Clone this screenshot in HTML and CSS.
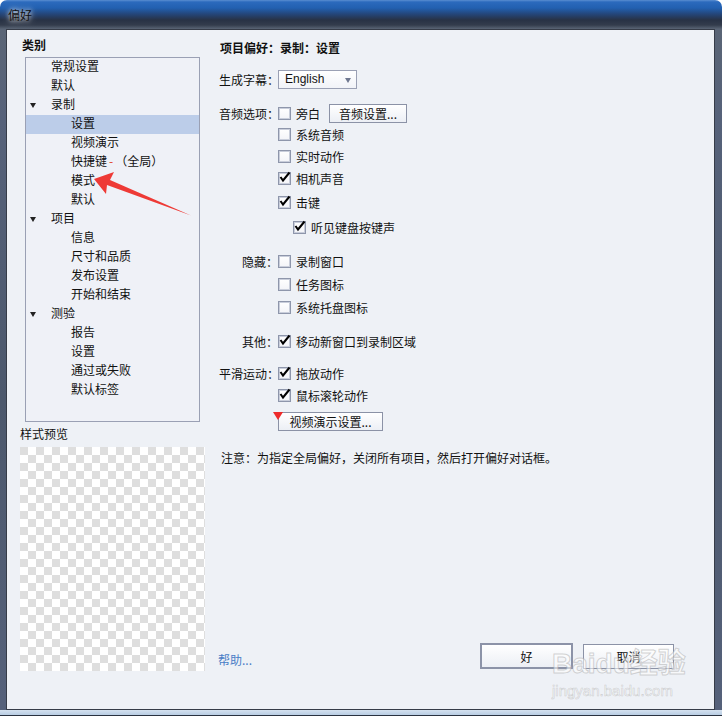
FILE: index.html
```html
<!DOCTYPE html>
<html lang="zh-CN">
<head>
<meta charset="utf-8">
<title>偏好</title>
<link rel="stylesheet" href="styles.css">
</head>
<body>
<div class="window">
  <div class="titlebar"><span class="title">偏好</span></div>
  <div class="client">
    <div class="left">
      <div class="cat-label">类别</div>
      <div class="tree">
        <div class="node l1">常规设置</div>
        <div class="node l1">默认</div>
        <div class="node l1"><span class="tri"></span>录制</div>
        <div class="node l2 sel">设置</div>
        <div class="node l2">视频演示</div>
        <div class="node l2">快捷键 <span class="dash">-</span> （全局）</div>
        <div class="node l2">模式</div>
        <div class="node l2">默认</div>
        <div class="node l1"><span class="tri"></span>项目</div>
        <div class="node l2">信息</div>
        <div class="node l2">尺寸和品质</div>
        <div class="node l2">发布设置</div>
        <div class="node l2">开始和结束</div>
        <div class="node l1"><span class="tri"></span>测验</div>
        <div class="node l2">报告</div>
        <div class="node l2">设置</div>
        <div class="node l2">通过或失败</div>
        <div class="node l2">默认标签</div>
      </div>
      <div class="preview-label">样式预览</div>
      <div class="checker"></div>
    </div>

    <div class="right">
      <div class="row heading">项目偏好：录制：设置</div>

      <div class="row mt12">
        <span class="lbl">生成字幕：</span>
        <span class="select"><span class="sel-text">English</span><span class="sel-arrow"></span></span>
      </div>

      <div class="row mt14">
        <span class="lbl">音频选项：</span>
        <span class="cb"></span><span class="txt">旁白</span>
        <span class="btn btn-audio">音频设置...</span>
      </div>
      <div class="row mt1 ind"><span class="cb"></span><span class="txt">系统音频</span></div>
      <div class="row mt2 ind"><span class="cb"></span><span class="txt">实时动作</span></div>
      <div class="row mt2 ind"><span class="cb on"><svg viewBox="0 0 13 13" width="13" height="13"><polyline points="2.5,6 5,9.5 11.5,1.5" fill="none" stroke="#000" stroke-width="2"/></svg></span><span class="txt">相机声音</span></div>
      <div class="row mt4 ind"><span class="cb on"><svg viewBox="0 0 13 13" width="13" height="13"><polyline points="2.5,6 5,9.5 11.5,1.5" fill="none" stroke="#000" stroke-width="2"/></svg></span><span class="txt">击键</span></div>
      <div class="row mt5 ind2"><span class="cb on"><svg viewBox="0 0 13 13" width="13" height="13"><polyline points="2.5,6 5,9.5 11.5,1.5" fill="none" stroke="#000" stroke-width="2"/></svg></span><span class="txt">听见键盘按键声</span></div>

      <div class="row mt14">
        <span class="lbl">隐藏：</span>
        <span class="cb"></span><span class="txt">录制窗口</span>
      </div>
      <div class="row mt3 ind"><span class="cb"></span><span class="txt">任务图标</span></div>
      <div class="row mt3 ind"><span class="cb"></span><span class="txt">系统托盘图标</span></div>

      <div class="row mt14">
        <span class="lbl">其他：</span>
        <span class="cb on"><svg viewBox="0 0 13 13" width="13" height="13"><polyline points="2.5,6 5,9.5 11.5,1.5" fill="none" stroke="#000" stroke-width="2"/></svg></span><span class="txt">移动新窗口到录制区域</span>
      </div>

      <div class="row mt12">
        <span class="lbl">平滑运动：</span>
        <span class="cb on"><svg viewBox="0 0 13 13" width="13" height="13"><polyline points="2.5,6 5,9.5 11.5,1.5" fill="none" stroke="#000" stroke-width="2"/></svg></span><span class="txt">拖放动作</span>
      </div>
      <div class="row mt2 ind"><span class="cb on"><svg viewBox="0 0 13 13" width="13" height="13"><polyline points="2.5,6 5,9.5 11.5,1.5" fill="none" stroke="#000" stroke-width="2"/></svg></span><span class="txt">鼠标滚轮动作</span></div>

      <div class="row mt6 ind">
        <span class="btn btn-video">视频演示设置...</span>
      </div>

      <div class="row mt16 note">注意：为指定全局偏好，关闭所有项目，然后打开偏好对话框。</div>

      <div class="bottom">
        <span class="help">帮助...</span>
        <span class="spacer"></span>
        <span class="btn btn-ok">好</span>
        <span class="btn btn-cancel">取消</span>
      </div>
    </div>
  </div>

  <svg class="arrow" width="722" height="716" viewBox="0 0 722 716">
    <polygon points="94,179 114,172 110,180 191,215.5 107,185 106,194" fill="#ee3a36"/>
  </svg>

  <div class="watermark">
    <div class="wm-big">Baidu经验</div>
    <div class="wm-small">jingyan.baidu.com</div>
  </div>
</div>
</body>
</html>
```

FILE: styles.css
```css
html, body {
  margin: 0;
  padding: 0;
  background: #ffffff;
}

body {
  font-family: "Noto Sans CJK SC", "Noto Sans", "DejaVu Sans", sans-serif;
  font-size: 12px;
  color: #111;
}

.window {
  position: relative;
  width: 722px;
  height: 716px;
  box-sizing: border-box;
  padding: 0 7px 6px 6px;
  display: flex;
  flex-direction: column;
  border-radius: 7px 7px 0 0;
  overflow: hidden;
  background:
    linear-gradient(to top, #2a323f 0, #2a323f 1px, #b9cde3 1px, #d4e1ef 6px, transparent 6px),
    linear-gradient(#5a8ed0 0, #2b6abd 2px, #2260b0 8px, #24467a 14px, #283245 20px, #333c4c 25px, #5a6576 29px, #56627a 120px, #4c586c 400px, #55617a 700px);
}

.titlebar {
  height: 29px;
  flex: none;
  display: flex;
  align-items: center;
  padding-left: 2px;
}

.title {
  font-size: 12px;
  color: #101010;
  text-shadow: 0 0 4px rgba(255,255,255,0.9), 0 0 9px rgba(255,255,255,0.6);
}

.client {
  flex: 1;
  display: flex;
  border: 1px solid #363c48;
  background: #eef1f6;
  min-height: 0;
}

/* ---------- left column ---------- */
.left {
  width: 203px;
  flex: none;
  display: flex;
  flex-direction: column;
}

.cat-label {
  margin: 7px 0 0 15px;
  line-height: 16px;
  font-weight: bold;
  color: #111;
}

.tree {
  margin: 4px 0 0 18px;
  width: 175px;
  height: 365px;
  box-sizing: border-box;
  border: 1px solid #9aa0b4;
  background: #eff1f7;
}

.node {
  height: 19px;
  box-sizing: border-box;
  padding-bottom: 3px;
  line-height: 16px;
  display: flex;
  align-items: center;
  white-space: nowrap;
  color: #111;
}

.node.l1 { padding-left: 25px; position: relative; }
.node.l2 { padding-left: 45px; }
.node.sel { background: #bccde9; }

.tri {
  position: absolute;
  left: 4px;
  top: 7px;
  width: 0;
  height: 0;
  border-left: 3.5px solid transparent;
  border-right: 3.5px solid transparent;
  border-top: 5px solid #222;
}

.dash { color: #e2401c; margin: 0 2px; }

.preview-label {
  margin: 4px 0 0 13px;
  line-height: 16px;
  color: #111;
}

.checker {
  margin: 5px 0 0 13px;
  width: 185px;
  height: 224px;
  background: repeating-conic-gradient(#ffffff 0 25%, #dedede 0 50%) 0 0 / 16px 16px;
}

/* ---------- right column ---------- */
.right {
  flex: 1;
  display: flex;
  flex-direction: column;
  padding: 7px 40px 40px 9px;
  min-width: 0;
}

.row {
  height: 20px;
  display: flex;
  align-items: center;
  white-space: nowrap;
  position: relative;
}

.heading {
  font-weight: bold;
  padding-left: 1px;
}

.mt1 { margin-top: 1px; }
.mt2 { margin-top: 2px; }
.mt3 { margin-top: 3px; }
.mt4 { margin-top: 4px; }
.mt5 { margin-top: 5px; }
.mt6 { margin-top: 6px; }
.mt12 { margin-top: 12px; }
.mt14 { margin-top: 14px; }
.mt16 { margin-top: 16px; }

.lbl {
  width: 59px;
  flex: none;
  text-align: right;
  direction: rtl;
  unicode-bidi: plaintext;
}

.ind { padding-left: 59px; }
.ind2 { padding-left: 74px; }

.select {
  width: 79px;
  height: 19px;
  box-sizing: border-box;
  border: 1px solid #9aa0b4;
  background: linear-gradient(#ffffff, #f1f3f8);
  display: flex;
  align-items: center;
  position: relative;
}

.sel-text {
  padding-left: 6px;
  font-family: "Liberation Sans", "Noto Sans", sans-serif;
  font-size: 12px;
  color: #111;
}

.sel-arrow {
  position: absolute;
  right: 5px;
  top: 7px;
  width: 0;
  height: 0;
  border-left: 3.5px solid transparent;
  border-right: 3.5px solid transparent;
  border-top: 5px solid #6f7890;
}

.cb {
  width: 13px;
  height: 13px;
  flex: none;
  box-sizing: border-box;
  border: 1px solid #8e96ab;
  box-shadow: inset 0 0 0 1px #c9cedb;
  background: linear-gradient(#ffffff, #f3f4f8);
  position: relative;
}

.cb svg {
  position: absolute;
  left: -1px;
  top: -2px;
  overflow: visible;
}

.txt {
  margin-left: 5px;
  color: #111;
}

.btn {
  height: 19px;
  box-sizing: border-box;
  border: 1px solid #8b92a6;
  background: linear-gradient(#ffffff, #eceff5);
  display: inline-flex;
  align-items: center;
  justify-content: center;
  color: #111;
  position: relative;
}

.btn-audio {
  width: 78px;
  margin-left: 9px;
}

.btn-video {
  width: 105px;
}

.btn-video::before {
  content: "";
  position: absolute;
  left: -6px;
  top: -1px;
  width: 0;
  height: 0;
  border-left: 5px solid transparent;
  border-right: 5px solid transparent;
  border-top: 8px solid #ee2a2a;
}

.note {
  padding-left: 2px;
  color: #111;
}

.bottom {
  margin-top: auto;
  display: flex;
  align-items: center;
  height: 26px;
}

.help {
  color: #4a7ec6;
  margin-left: -1px;
  margin-top: 6px;
}

.spacer { flex: 1; }

.btn-ok {
  width: 93px;
  height: 26px;
  border: 2px solid #8c93a8;
}

.btn-cancel {
  width: 91px;
  height: 25px;
  margin-left: 10px;
}

/* ---------- overlays ---------- */
.arrow {
  position: absolute;
  left: 0;
  top: 0;
  pointer-events: none;
}

.watermark {
  position: absolute;
  left: 552px;
  top: 648px;
  pointer-events: none;
  font-family: "Liberation Sans", "Noto Sans CJK SC", sans-serif;
  color: rgba(255,255,255,0.55);
  -webkit-text-stroke: 1px rgba(160,160,160,0.45);
}

.wm-big {
  font-size: 28px;
  font-weight: bold;
  line-height: 32px;
}

.wm-small {
  font-size: 15px;
  line-height: 18px;
  margin-top: 2px;
  -webkit-text-stroke: 0.6px rgba(160,160,160,0.45);
}
```
